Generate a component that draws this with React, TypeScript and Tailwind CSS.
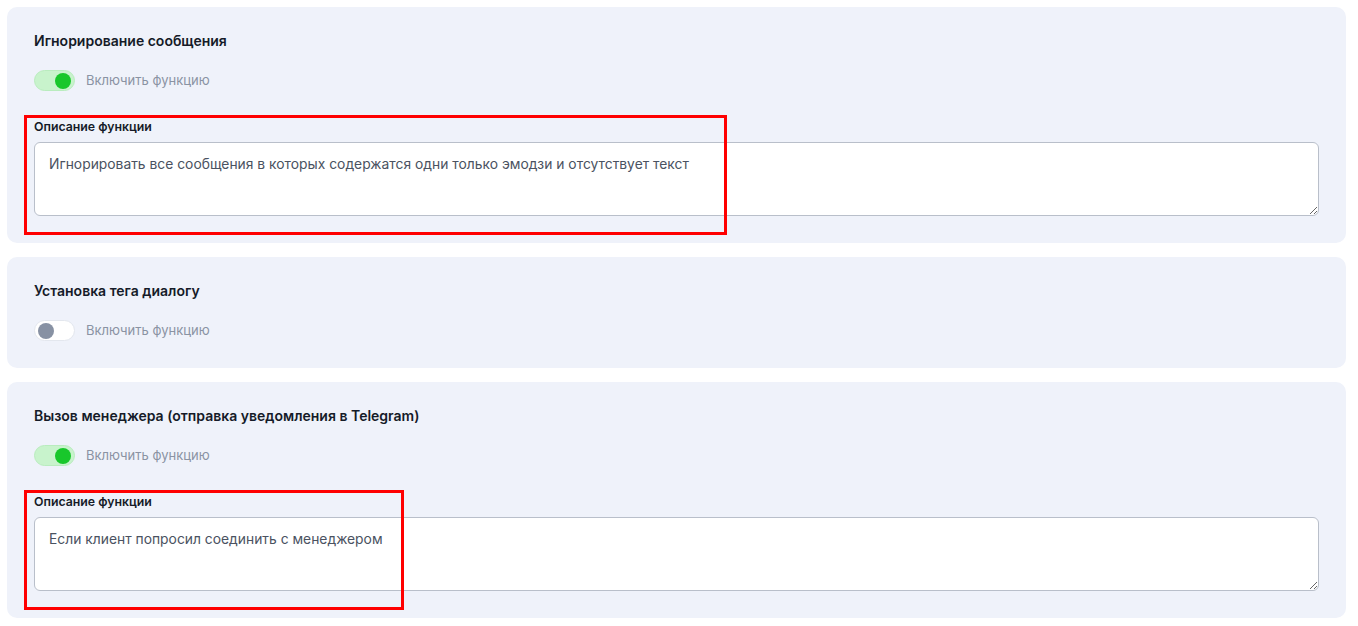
import { useState } from "react";

type Feature = {
  title: string;
  enabled: boolean;
  description?: string;
  markWidth?: number;
};

const features: Feature[] = [
  {
    title: "Игнорирование сообщения",
    enabled: true,
    description: "Игнорировать все сообщения в которых содержатся одни только эмодзи и отсутствует текст",
    markWidth: 703,
  },
  { title: "Установка тега диалогу", enabled: false },
  {
    title: "Вызов менеджера (отправка уведомления в Telegram)",
    enabled: true,
    description: "Если клиент попросил соединить с менеджером",
    markWidth: 380,
  },
];

function Toggle({ on, onClick }: { on: boolean; onClick: () => void }) {
  return (
    <button
      onClick={onClick}
      className={`relative w-[41px] h-[21px] rounded-full border transition-colors ${
        on ? "bg-[#c8f3cc] border-[#b9ecbe]" : "bg-white border-[#e3e7ee]"
      }`}
    >
      <span
        className={`absolute top-1/2 -translate-y-1/2 w-4 h-4 rounded-full ${
          on ? "right-[3px] bg-[#18c72b]" : "left-[3px] bg-[#8791a3]"
        }`}
      />
    </button>
  );
}

function FeatureCard({ feature }: { feature: Feature }) {
  const [on, setOn] = useState(feature.enabled);
  return (
    <div className="bg-[#eff2fa] rounded-[10px] px-[27px] pt-6 pb-[27px]">
      <h3 className="text-sm leading-5 font-semibold text-[#151b28]">{feature.title}</h3>
      <div className="flex items-center gap-[11px] mt-[19px]">
        <Toggle on={on} onClick={() => setOn(!on)} />
        <span className="text-[13px] text-[#8a93a3]">Включить функцию</span>
      </div>
      {feature.description && (
        <div className="relative mt-[28px]">
          {/* annotation frame */}
          <div
            className="absolute -left-[10px] -top-[4px] h-[120px] border-[3px] border-[#ff0000] pointer-events-none"
            style={{ width: feature.markWidth }}
          />
          <label className="block text-[12.3px] leading-4 font-semibold text-[#151b28]">Описание функции</label>
          <textarea
            readOnly
            defaultValue={feature.description}
            className="block w-full h-[74px] mt-[7px] bg-white border border-[#b9bfca] rounded-md px-[14px] py-[11px] text-[13.85px] leading-5 text-[#4a5261] outline-none"
          />
        </div>
      )}
    </div>
  );
}

export default function App() {
  return (
    <div className="min-h-screen bg-white pl-[7px] pr-[12px] pt-[7px] font-['Inter',sans-serif]">
      <div className="flex flex-col gap-[14px]">
        {features.map((f, i) => (
          <FeatureCard key={i} feature={f} />
        ))}
      </div>
    </div>
  );
}
